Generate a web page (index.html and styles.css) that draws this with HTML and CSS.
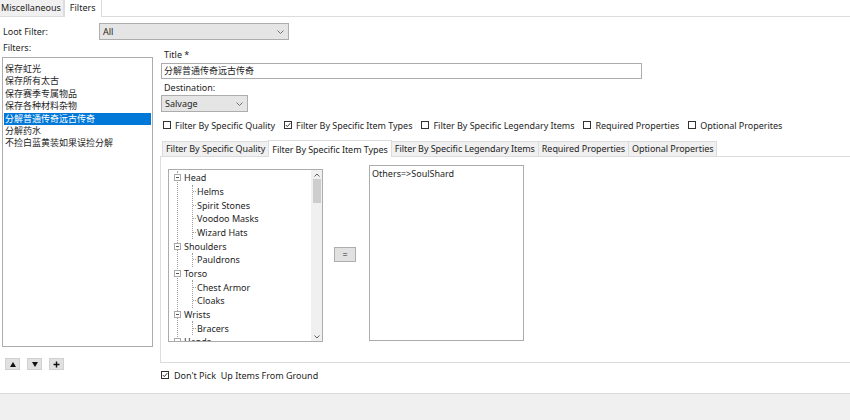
FILE: index.html
```html
<!DOCTYPE html>
<html>
<head>
<meta charset="utf-8">
<link rel="stylesheet" href="styles.css">
</head>
<body>
<div class="window">
  <div class="tabstrip">
    <div class="wtab">Miscellaneous</div>
    <div class="wtab wtab-active">Filters</div>
  </div>
  <div class="content">
    <div class="loot-row">
      <span class="loot-label">Loot Filter:</span>
      <div class="combo combo-loot"><span>All</span><svg class="chev" width="7" height="4" viewBox="0 0 7 4"><path d="M0.5 0.5 L3.5 3.5 L6.5 0.5" fill="none" stroke="#707070"/></svg></div>
    </div>
    <div class="main">
      <div class="left">
        <div class="filters-label">Filters:</div>
        <div class="listbox">
          <div class="li">保存虹光</div>
          <div class="li">保存所有太古</div>
          <div class="li">保存赛季专属物品</div>
          <div class="li">保存各种材料杂物</div>
          <div class="li li-sel">分解普通传奇远古传奇</div>
          <div class="li">分解药水</div>
          <div class="li">不捡白蓝黄装如果误捡分解</div>
        </div>
        <div class="list-buttons">
          <div class="sbtn"><svg width="6" height="5" viewBox="0 0 6 5"><path d="M3 0 L6 5 L0 5 Z" fill="#111"/></svg></div>
          <div class="sbtn"><svg width="6" height="5" viewBox="0 0 6 5"><path d="M0 0 L6 0 L3 5 Z" fill="#111"/></svg></div>
          <div class="sbtn"><svg width="7" height="7" viewBox="0 0 7 7"><path d="M3.5 0.5 V6.5 M0.5 3.5 H6.5" stroke="#111" stroke-width="1.4"/></svg></div>
        </div>
      </div>
      <div class="right">
        <div class="field-label">Title *</div>
        <div class="textbox">分解普通传奇远古传奇</div>
        <div class="field-label dest-label">Destination:</div>
        <div class="combo combo-dest"><span>Salvage</span><svg class="chev" width="7" height="4" viewBox="0 0 7 4"><path d="M0.5 0.5 L3.5 3.5 L6.5 0.5" fill="none" stroke="#707070"/></svg></div>
        <div class="check-row">
          <span class="check"><svg width="8" height="8" viewBox="0 0 8 8"><rect x="0.5" y="0.5" width="7" height="7" fill="#fff" stroke="#333"/></svg>Filter By Specific Quality</span>
          <span class="check"><svg width="8" height="8" viewBox="0 0 8 8"><rect x="0.5" y="0.5" width="7" height="7" fill="#fff" stroke="#333"/><path d="M1.8 4 L3.3 5.6 L6.3 2.2" fill="none" stroke="#333"/></svg>Filter By Specific Item Types</span>
          <span class="check"><svg width="8" height="8" viewBox="0 0 8 8"><rect x="0.5" y="0.5" width="7" height="7" fill="#fff" stroke="#333"/></svg>Filter By Specific Legendary Items</span>
          <span class="check"><svg width="8" height="8" viewBox="0 0 8 8"><rect x="0.5" y="0.5" width="7" height="7" fill="#fff" stroke="#333"/></svg>Required Properties</span>
          <span class="check"><svg width="8" height="8" viewBox="0 0 8 8"><rect x="0.5" y="0.5" width="7" height="7" fill="#fff" stroke="#333"/></svg>Optional Properites</span>
        </div>
        <div class="ptabs">
          <div class="ptab">Filter By Specific Quality</div>
          <div class="ptab ptab-active">Filter By Specific Item Types</div>
          <div class="ptab">Filter By Specific Legendary Items</div>
          <div class="ptab">Required Properties</div>
          <div class="ptab">Optional Properties</div>
        </div>
        <div class="panel">
          <div class="treebox">
            <div class="tree">
              <div class="tree-root">
                <div class="node-row"><svg class="exp" width="7" height="7" viewBox="0 0 7 7"><rect x="0.5" y="0.5" width="6" height="6" fill="#fff" stroke="#a8a8a8"/><path d="M2 3.5 H5" stroke="#555"/></svg><span>Head</span></div>
                <div class="children">
                  <div class="child">Helms</div>
                  <div class="child">Spirit Stones</div>
                  <div class="child">Voodoo Masks</div>
                  <div class="child">Wizard Hats</div>
                </div>
                <div class="node-row"><svg class="exp" width="7" height="7" viewBox="0 0 7 7"><rect x="0.5" y="0.5" width="6" height="6" fill="#fff" stroke="#a8a8a8"/><path d="M2 3.5 H5" stroke="#555"/></svg><span>Shoulders</span></div>
                <div class="children">
                  <div class="child">Pauldrons</div>
                </div>
                <div class="node-row"><svg class="exp" width="7" height="7" viewBox="0 0 7 7"><rect x="0.5" y="0.5" width="6" height="6" fill="#fff" stroke="#a8a8a8"/><path d="M2 3.5 H5" stroke="#555"/></svg><span>Torso</span></div>
                <div class="children">
                  <div class="child">Chest Armor</div>
                  <div class="child">Cloaks</div>
                </div>
                <div class="node-row"><svg class="exp" width="7" height="7" viewBox="0 0 7 7"><rect x="0.5" y="0.5" width="6" height="6" fill="#fff" stroke="#a8a8a8"/><path d="M2 3.5 H5" stroke="#555"/></svg><span>Wrists</span></div>
                <div class="children">
                  <div class="child">Bracers</div>
                </div>
                <div class="node-row"><svg class="exp" width="7" height="7" viewBox="0 0 7 7"><rect x="0.5" y="0.5" width="6" height="6" fill="#fff" stroke="#a8a8a8"/><path d="M2 3.5 H5" stroke="#555"/></svg><span>Hands</span></div>
              </div>
            </div>
            <div class="vscroll">
              <svg class="sarrow" width="6" height="4" viewBox="0 0 6 4"><path d="M0.5 3.5 L3 1 L5.5 3.5" fill="none" stroke="#606060"/></svg>
              <div class="thumb"></div>
              <div class="track"></div>
              <svg class="sarrow" width="6" height="4" viewBox="0 0 6 4"><path d="M0.5 0.5 L3 3 L5.5 0.5" fill="none" stroke="#606060"/></svg>
            </div>
          </div>
          <div class="eq-btn">=</div>
          <div class="resultbox">Others=&gt;SoulShard</div>
        </div>
        <div class="check bottom-check"><svg width="8" height="8" viewBox="0 0 8 8"><rect x="0.5" y="0.5" width="7" height="7" fill="#fff" stroke="#333"/><path d="M1.8 4 L3.3 5.6 L6.3 2.2" fill="none" stroke="#333"/></svg>Don't Pick&nbsp; Up Items From Ground</div>
      </div>
    </div>
  </div>
  <div class="footer"></div>
</div>
</body>
</html>
```

FILE: styles.css
```css
* { box-sizing: border-box; }
html, body { margin: 0; padding: 0; }
body {
  width: 850px;
  height: 420px;
  background: #fff;
  font-family: "Noto Sans", "Noto Sans CJK SC", sans-serif;
  font-size: 9px;
  color: #1e1e1e;
  overflow: hidden;
}
.window {
  width: 850px;
  height: 420px;
  display: flex;
  flex-direction: column;
}
.tabstrip {
  height: 17px;
  display: flex;
  border-bottom: 1px solid #dcdcdc;
  flex: none;
}
.wtab {
  height: 16px;
  line-height: 16px;
  padding: 0 2px 0 1px;
  background: #f0f0f0;
  border-right: 1px solid #dcdcdc;
  color: #222;
}
.wtab-active {
  background: #fff;
  height: 17px;
  padding: 0 5px;
  border-left: 1px solid #dcdcdc;
  margin-left: 0;
}
.content { flex: 1; display: flex; flex-direction: column; }
.loot-row {
  display: flex;
  align-items: center;
  margin-top: 6px;
  height: 17px;
}
.loot-label { width: 96px; margin-left: 3px; }
.combo {
  display: flex;
  align-items: center;
  justify-content: space-between;
  background: #e5e5e5;
  border: 1px solid #adadad;
  padding: 0 4px 0 3px;
}
.combo-loot { width: 190px; height: 17px; }
.combo-dest { width: 87px; height: 17px; margin-top: 1px; }
.main { display: flex; flex: 1; }
.left { width: 151px; margin-left: 2px; display: flex; flex-direction: column; }
.filters-label { margin-top: 2px; height: 12px; line-height: 12px; padding-left: 1px; }
.listbox {
  margin-top: 3px;
  height: 290px;
  border: 1px solid #acacac;
  padding: 5px 1px 0 1px;
}
.li { height: 12.4px; line-height: 12.4px; padding-left: 1px; white-space: nowrap; }
.li-sel { background: #0078d7; color: #fff; }
.list-buttons { display: flex; gap: 7px; margin-top: 11px; margin-left: 3px; }
.sbtn {
  width: 15px;
  height: 12px;
  background: #e1e1e1;
  border: 1px solid #d0d0d0;
  display: flex;
  align-items: center;
  justify-content: center;
}
.right { margin-left: 7px; flex: 1; display: flex; flex-direction: column; }
.field-label { height: 12px; line-height: 12px; padding-left: 4px; margin-top: 9px; color: #222; }
.dest-label { margin-top: 3px; }
.textbox {
  margin-top: 2px;
  margin-left: 1px;
  width: 481px;
  height: 16px;
  line-height: 14px;
  border: 1px solid #acacac;
  padding-left: 2px;
}
.combo-dest { margin-left: 1px; }
.check-row {
  display: flex;
  gap: 9px;
  margin-top: 7px;
  height: 12px;
  align-items: center;
  padding-left: 3px;
  letter-spacing: -0.03px;
}
.check { display: flex; align-items: center; white-space: nowrap; }
.check svg { margin-right: 4px; flex: none; }
.ptabs {
  display: flex;
  margin-top: 10px;
  margin-left: 2px;
  height: 15px;
  align-items: flex-end;
  letter-spacing: -0.06px;
}
.ptab {
  height: 15px;
  line-height: 14px;
  padding: 0 3px;
  background: #f0f0f0;
  border: 1px solid #dcdcdc;
  border-bottom: none;
  margin-right: -1px;
  white-space: nowrap;
}
.ptab-active {
  background: #fff;
  height: 17px;
  line-height: 18px;
  margin-bottom: -1px;
  position: relative;
  z-index: 1;
}
.panel {
  height: 207px;
  border-top: 1px solid #dcdcdc;
  border-left: 1px solid #dcdcdc;
  border-bottom: 1px solid #dcdcdc;
  display: flex;
  align-items: flex-start;
  padding-top: 8px;
}
.treebox {
  margin-left: 7px;
  margin-top: 4px;
  width: 155px;
  height: 173px;
  border: 1px solid #acacac;
  display: flex;
  overflow: hidden;
}
.tree { flex: 1; overflow: hidden; padding-top: 1px; }
.tree-root {
  margin-left: 8px;
  border-left: 1px dotted #a0a0a0;
  margin-top: 6px;
}
.node-row {
  display: flex;
  align-items: center;
  height: 13.67px;
  margin-top: -6px;
  margin-bottom: 6px;
  margin-left: -4px;
  background: transparent;
}
.node-row .exp { flex: none; margin-right: 3px; }
.children {
  margin-left: 14px;
  margin-top: -6px;
  margin-bottom: 6px;
  border-left: 1px dotted #a0a0a0;
  padding-top: 6px;
}
.child {
  height: 13.67px;
  display: flex;
  align-items: center;
  margin-top: -6px;
  margin-bottom: 6px;
}
.child::before {
  content: "";
  width: 3px;
  border-top: 1px dotted #a0a0a0;
  margin-right: 1px;
}
.vscroll {
  width: 11px;
  flex: none;
  background: #f0f0f0;
  display: flex;
  flex-direction: column;
  align-items: center;
  padding: 3px 0 2px;
}
.thumb { width: 8px; height: 24px; background: #cdcdcd; margin-top: 2px; }
.track { flex: 1; }
.eq-btn {
  margin-left: 11px;
  margin-top: 82px;
  width: 22px;
  height: 15px;
  background: #e1e1e1;
  border: 1px solid #adadad;
  text-align: center;
  line-height: 13px;
  font-size: 9px;
}
.resultbox {
  margin-left: 13px;
  width: 155px;
  height: 176px;
  border: 1px solid #acacac;
  padding: 2px 2px;
  line-height: 12px;
}
.bottom-check { margin-top: 6px; height: 12px; margin-left: 1px; }
.bottom-check svg { margin-right: 5px; }
.footer {
  height: 27px;
  flex: none;
  background: #f0f0f0;
  border-top: 1px solid #dadada;
}
```
